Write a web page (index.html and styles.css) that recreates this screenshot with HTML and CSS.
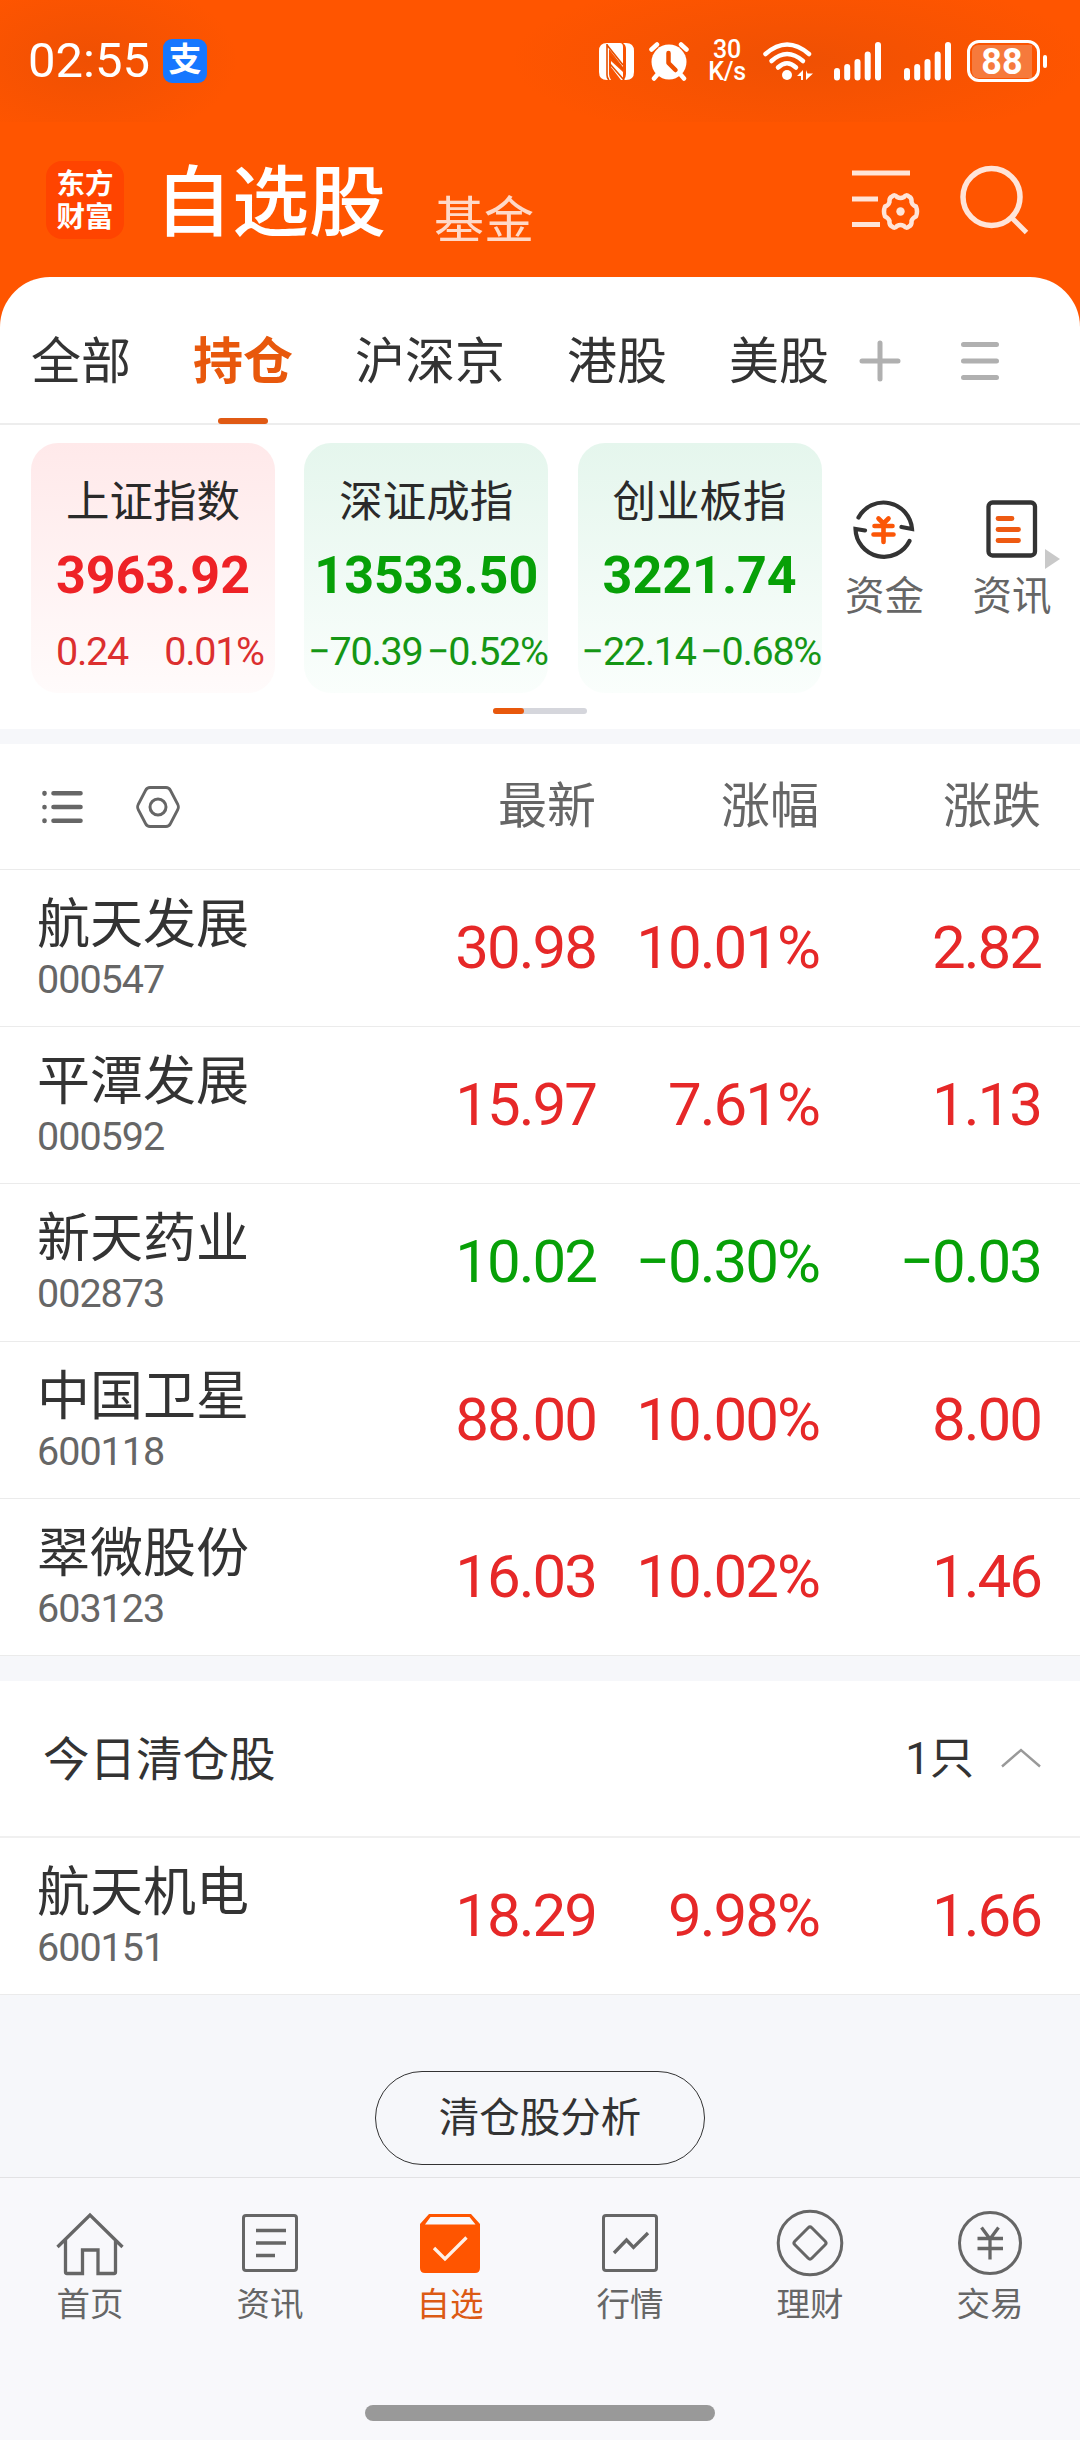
FILE: index.html
```html
<!DOCTYPE html>
<html lang="zh-CN">
<head>
    <meta charset="UTF-8">
    <meta name="viewport" content="width=device-width, initial-scale=1.0">
    <title>自选股</title>

    <link rel="stylesheet" href="styles.css">
</head>
<body>
    <div class="status">
        <span class="time">02:55</span>
        <span class="alipay">支</span>
        <div class="status-icons">
            <svg class="nfc" width="35" height="37" viewBox="0 0 35 37">
                <path fill="#fff" d="M8 0h13q3 0 3 4v20L10 6v25q0 3 2 6H8q-8 0-8-8V8q0-8 8-8z"/>
                <path fill="#fff" d="M24 0h3q8 0 8 8v21q0 8-8 8h-2q2-3 2-6V6q0-4-3-6z"/>
                <path fill="#fff" d="M12 18l12 11v8h-2L12 24z"/>
                <path stroke="#e65100" stroke-width="1.6" fill="none" d="M8 1v31q0 3 2 5M8 2l16 20M11 13l13 13M11 21l14 16"/>
            </svg>
            <svg class="alarm" width="40" height="39" viewBox="0 0 40 39">
                <circle cx="20" cy="20" r="17.5" fill="#fff"/>
                <path stroke="#fff" stroke-width="4.500" stroke-linecap="round" d="M2.500 7.500l5.500-5M37.500 7.500l-5.500-5M8 33l-3 3.500M32 33l3 3.500"/>
                <path stroke="#ee5000" stroke-width="4.500" stroke-linecap="round" stroke-linejoin="round" fill="none" d="M19.500 11v10l7 7"/>
            </svg>
            <div class="speed"><span>30</span><span>K/s</span></div>
            <svg class="wifi" width="51" height="39" viewBox="0 0 51 39">
                <g fill="none" stroke="#fff" stroke-width="4.500" stroke-linecap="round">
                    <path d="M2.500 12Q24 -7 46 12"/>
                    <path d="M8.500 19Q24 5 40 19"/>
                    <path d="M15 25.500Q24 17 33 25.500"/>
                </g>
                <circle cx="24" cy="33" r="5" fill="#fff"/>
                <path fill="#fff" d="M40 28v10h-2v-4h-4zM43 38V28l1.500 3.500H50z"/>
            </svg>
            <svg class="signal" width="48" height="39" viewBox="0 0 48 39">
                <path stroke="#fff" stroke-width="6" stroke-linecap="round" d="M3 29v6.500M13.200 25v10.500M23.500 20v15.500M33.700 12.500v23M44 3v32.500"/>
            </svg>
            <svg class="signal second" width="48" height="39" viewBox="0 0 48 39">
                <path stroke="#fff" stroke-width="6" stroke-linecap="round" d="M3 29v6.500M13.200 25v10.500M23.500 20v15.500M33.700 12.500v23M44 3v32.500"/>
            </svg>
            <div class="battery"><span>88</span></div>
            <i class="battery-tip"></i>
        </div>
    </div>

    <header class="header">
        <div class="logo">东方<br>财富</div>
        <h1>自选股</h1>
        <span class="fund">基金</span>
        <svg class="filter" width="68" height="64" viewBox="0 0 68 64">
            <path stroke="#ffe4d8" stroke-width="5" d="M0 5h58M0 31h26M0 56.500h28"/>
            <path fill="none" stroke="#ffe4d8" stroke-width="4.500" stroke-linejoin="round" d="M40 28.500Q43 26 45 29Q48.500 31 52 29Q54 26 57 28.500Q60 30 59.500 34Q60.500 37.500 64 38.500Q66 43.500 64 48.500Q60.500 50 59.500 53Q60 57 57 58.500Q54 61 52 58Q48.500 56 45 58Q43 61 40 58.500Q37 57 37.500 53Q36.500 50 33 48.500Q31 43.500 33 38.500Q36.500 37.500 37.500 34Q37 30 40 28.500z"/>
            <circle cx="48.500" cy="43.500" r="4.200" fill="#ffe4d8"/>
        </svg>
        <svg class="search" width="70" height="70" viewBox="0 0 70 70">
            <circle cx="31.500" cy="32" r="28.500" fill="none" stroke="#ffe4d8" stroke-width="5.500"/>
            <path stroke="#ffe4d8" stroke-width="5" d="M51 52l15.500 15.500"/>
        </svg>
    </header>

    <div class="panel-wrap">
        <nav class="tabs">
            <span>全部</span>
            <span class="active">持仓</span>
            <span>沪深京</span>
            <span>港股</span>
            <span>美股</span>
            <svg class="plus" width="42" height="42" viewBox="0 0 42 42">
                <path stroke="#b0b0b0" stroke-width="5" stroke-linecap="round" d="M3 21h36M21 3v36"/>
            </svg>
            <svg class="menu" width="38" height="40" viewBox="0 0 38 40">
                <path stroke="#b0b0b0" stroke-width="5" stroke-linecap="round" d="M2.500 3.500h33M2.500 20h33M2.500 36.500h33"/>
            </svg>
        </nav>
    </div>

    <section class="indices">
        <div class="index-row">
            <div class="card up">
                <h2>上证指数</h2>
                <strong>3963.92</strong>
                <div class="diff"><span>0.24</span><span>0.01%</span></div>
            </div>
            <div class="card down">
                <h2>深证成指</h2>
                <strong>13533.50</strong>
                <div class="diff"><span>−70.39</span><span>−0.52%</span></div>
            </div>
            <div class="card down">
                <h2>创业板指</h2>
                <strong>3221.74</strong>
                <div class="diff"><span>−22.14</span><span>−0.68%</span></div>
            </div>
            <div class="shortcut">
                <svg width="62" height="62" viewBox="0 0 62 62">
                    <g fill="none" stroke="#333" stroke-width="4.200" stroke-linecap="round">
                        <path d="M5.500 19.500A28.500 28.500 0 0 1 59 31L48.500 29"/>
                        <path d="M56.500 43A28.500 28.500 0 0 1 2.500 31L12 32.500"/>
                    </g>
                    <path fill="none" stroke="#fb5607" stroke-width="4.600" stroke-linecap="round" d="M25.500 20.500l5 5 5-5M21.500 28h18M20.500 36.500h20M30.500 27v17"/>
                </svg>
                <span>资金</span>
            </div>
            <div class="shortcut">
                <svg width="52" height="62" viewBox="0 0 52 62">
                    <rect x="2.500" y="4.500" width="46.500" height="53" rx="4" fill="none" stroke="#333" stroke-width="4.300"/>
                    <path stroke="#ee5a12" stroke-width="4.800" stroke-linecap="round" d="M12 20.500h14M12 31.500h20.500M12 42.500h20.500"/>
                </svg>
                <span>资讯</span>
                <i class="more"></i>
            </div>
        </div>
        <div class="pager"><i></i></div>
    </section>

    <section class="list">
        <div class="row head">
            <div class="tools">
                <svg width="42" height="34" viewBox="0 0 42 34">
                    <path stroke="#666" stroke-width="4.600" stroke-linecap="round" d="M2.500 3v.6M2.500 17v.3M2.500 30.500v.5M11.500 3.300h27M11.500 17h27M11.500 30.700h27"/>
                </svg>
                <svg width="44" height="42" viewBox="0 0 44 42">
                    <path fill="none" stroke="#666" stroke-width="2.800" d="M14 1.500h16q3 0 4.500 3l7.300 14q1.200 2.500 0 5l-7.300 14q-1.500 3-4.500 3H14q-3 0-4.500-3L2.200 23.500q-1.200-2.500 0-5l7.300-14q1.500-3 4.500-3z"/>
                    <circle cx="22" cy="21" r="8" fill="none" stroke="#666" stroke-width="3"/>
                </svg>
            </div>
            <span>最新</span>
            <span>涨幅</span>
            <span>涨跌</span>
        </div>
        <div class="row up">
            <div class="stock"><b>航天发展</b><small>000547</small></div>
            <span>30.98</span><span>10.01%</span><span>2.82</span>
        </div>
        <div class="row up">
            <div class="stock"><b>平潭发展</b><small>000592</small></div>
            <span>15.97</span><span>7.61%</span><span>1.13</span>
        </div>
        <div class="row down">
            <div class="stock"><b>新天药业</b><small>002873</small></div>
            <span>10.02</span><span>−0.30%</span><span>−0.03</span>
        </div>
        <div class="row up">
            <div class="stock"><b>中国卫星</b><small>600118</small></div>
            <span>88.00</span><span>10.00%</span><span>8.00</span>
        </div>
        <div class="row up">
            <div class="stock"><b>翠微股份</b><small>603123</small></div>
            <span>16.03</span><span>10.02%</span><span>1.46</span>
        </div>
    </section>

    <section class="list cleared">
        <div class="cleared-head">
            <span class="label">今日清仓股</span>
            <span class="label count">1只</span>
            <svg width="40" height="20" viewBox="0 0 40 20">
                <path fill="none" stroke="#999" stroke-width="2.400" d="M1 18.500L20 2l19 16.500"/>
            </svg>
        </div>
        <div class="row up">
            <div class="stock"><b>航天机电</b><small>600151</small></div>
            <span>18.29</span><span>9.98%</span><span>1.66</span>
        </div>
    </section>

    <div class="analysis">
        <button type="button">清仓股分析</button>
    </div>

    <footer class="bottom">
        <div class="bottom-nav">
            <div class="item">
                <svg width="68" height="68" viewBox="0 0 68 68">
                    <path fill="none" stroke="#666" stroke-width="3.300" d="M1.500 38L34 6l32.500 32M9.500 31v32q0 1.500 1.500 1.500h15.500V41h15.500v23.500H58q1.500 0 1.500-1.500V31"/>
                </svg>
                <span>首页</span>
            </div>
            <div class="item">
                <svg width="68" height="68" viewBox="0 0 68 68">
                    <rect x="7.500" y="6.500" width="53" height="55" rx="2.500" fill="none" stroke="#666" stroke-width="3"/>
                    <path stroke="#666" stroke-width="3.300" d="M20 21.500h30M20 34h30M20 46.500h19"/>
                </svg>
                <span>资讯</span>
            </div>
            <div class="item active">
                <svg width="68" height="68" viewBox="0 0 68 68">
                    <path fill="#ff5500" fill-rule="evenodd" d="M13 5h42l9 10v44q0 5-5 5H9q-5 0-5-5V15zM14.500 8L9 15.500h50.500L53.500 8z"/>
                    <path fill="none" stroke="#fff0e6" stroke-width="3.300" d="M18 39l11 11 21.500-21.500"/>
                </svg>
                <span>自选</span>
            </div>
            <div class="item">
                <svg width="68" height="68" viewBox="0 0 68 68">
                    <rect x="7.500" y="6.500" width="53" height="55" rx="2.500" fill="none" stroke="#666" stroke-width="3"/>
                    <path fill="none" stroke="#666" stroke-width="3.300" d="M18 44l12.500-13 7 7.500L52 24"/>
                </svg>
                <span>行情</span>
            </div>
            <div class="item">
                <svg width="68" height="68" viewBox="0 0 68 68">
                    <circle cx="34" cy="34" r="31.800" fill="none" stroke="#666" stroke-width="3"/>
                    <rect x="22" y="22" width="24" height="24" rx="2.500" transform="rotate(45 34 34)" fill="none" stroke="#666" stroke-width="3"/>
                </svg>
                <span>理财</span>
            </div>
            <div class="item">
                <svg width="68" height="68" viewBox="0 0 68 68">
                    <circle cx="34" cy="34" r="30.500" fill="none" stroke="#666" stroke-width="3"/>
                    <path fill="none" stroke="#666" stroke-width="3.300" d="M25.500 18.500L34 30l8.500-11.500M21.500 29.500h25.500M21.500 39.500h25.500M34 29v21.500"/>
                </svg>
                <span>交易</span>
            </div>
        </div>
        <div class="home-bar"></div>
    </footer>
</body>
</html>
```
FILE: styles.css
```css
* {
    box-sizing: border-box;
}
body {
    margin: 0;
    width: 1080px;
    height: 2440px;
    overflow: hidden;
    display: flex;
    flex-direction: column;
    font-family: Roboto, "Noto Sans CJK SC", sans-serif;
    color: #333;
    background-color: #f6f7fa;
}
svg {
    display: block;
    flex: none;
}
h1, h2 {
    margin: 0;
    font-weight: 400;
}

/* status bar */
.status {
    height: 122px;
    padding: 0 33px 0 28px;
    display: flex;
    align-items: center;
    color: #fff;
    background:
        radial-gradient(ellipse 150px 85px at 88px 60px, rgba(205, 70, 10, .32), transparent),
        radial-gradient(ellipse 290px 85px at 800px 60px, rgba(205, 70, 10, .32), transparent),
        #ff5500;
}
.time {
    width: 122px;
    font-size: 49px;
    line-height: 60px;
    letter-spacing: 0;
}
.alipay {
    width: 44px;
    height: 44px;
    margin-left: 13px;
    border-radius: 9px;
    background-color: #1677ff;
    font-size: 33px;
    font-weight: 700;
    line-height: 42px;
    text-align: center;
}
.status-icons {
    margin-left: auto;
    display: flex;
    align-items: center;
}
.alarm {
    margin-left: 15px;
}
.speed {
    width: 42px;
    margin: 0 15px 0 17px;
    display: flex;
    flex-direction: column;
    font-size: 25px;
    font-weight: 500;
    line-height: 22px;
    text-align: center;
    letter-spacing: -.3px;
}
.signal {
    margin-left: 20px;
}
.second {
    margin-left: 22px;
}
.battery {
    width: 73px;
    height: 42px;
    margin-left: 15px;
    padding: 2px;
    border: 3px solid #fff;
    border-radius: 12px;
}
.battery span {
    display: block;
    width: 60px;
    height: 33px;
    border-radius: 6px 0 0 6px;
    background-color: #f67a3c;
    font-size: 36px;
    font-weight: 700;
    line-height: 34px;
    text-align: center;
}
.battery-tip {
    width: 4px;
    height: 13px;
    margin-left: 3px;
    border-radius: 2px;
    background-color: #fff;
}

/* title bar */
.header {
    height: 155px;
    padding: 0 50px 0 46px;
    display: flex;
    align-items: center;
    color: #fff;
    background-color: #ff5500;
}
.logo {
    width: 78px;
    height: 78px;
    border-radius: 16px;
    background-color: #ff4400;
    font-size: 28.500px;
    font-weight: 700;
    line-height: 33px;
    padding-top: 7px;
    text-align: center;
}
.header h1 {
    margin-left: 31px;
    font-size: 77px;
    font-weight: 500;
    line-height: 90px;
    padding-top: 8px;
}
.fund {
    margin-left: 48px;
    padding-top: 43px;
    font-size: 50px;
    line-height: 60px;
    color: #ffd9c8;
}
.filter {
    margin-left: auto;
}
.search {
    margin-left: 40px;
}

/* tabs */
.panel-wrap {
    background-color: #ff5500;
}
.tabs {
    height: 148px;
    padding-left: 31px;
    display: flex;
    align-items: center;
    gap: 62px;
    border-bottom: 2px solid #ededed;
    background-color: #fff;
    border-top-left-radius: 50px;
    border-top-right-radius: 50px;
    font-size: 50px;
}
.tabs span {
    height: 146px;
    padding-top: 12px;
    line-height: 146px;
    margin-top: -1px;
}
.tabs .active {
    display: flex;
    flex-direction: column;
    align-items: center;
    font-weight: 700;
    color: #e8580c;
}
.tabs .active::after {
    content: "";
    flex: none;
    width: 50px;
    height: 6px;
    margin-top: -17px;
    border-radius: 3px;
    background-color: #e05a14;
}
.plus {
    margin-left: -32px;
    margin-top: 22px;
}
.menu {
    margin-left: -2px;
    margin-top: 22px;
}

/* index cards */
.indices {
    height: 304px;
    padding-top: 18px;
    background-color: #fff;
}
.index-row {
    display: flex;
    padding-left: 31px;
}
.card {
    width: 244px;
    height: 250px;
    margin-right: 29.300px;
    padding-top: 27px;
    border-radius: 27px;
    text-align: center;
}
.card.up {
    background: linear-gradient(#ffe9ea, #fffbfb);
}
.card.down {
    background: linear-gradient(#e5f6ed, #fafefc);
}
.card h2 {
    font-size: 43.500px;
    line-height: 66px;
    color: #2a2a2a;
}
.card strong {
    display: block;
    font-size: 52px;
    line-height: 79px;
}
.card .diff {
    display: grid;
    grid-template-columns: 1fr 1fr;
    font-size: 39.500px;
    line-height: 74px;
    letter-spacing: -1.300px;
}
.diff span {
    display: flex;
    justify-content: center;
}
.up strong {
    color: #ee2226;
}
.row.up > span {
    color: #e62828;
}
.down strong, .row.down > span {
    color: #07a007;
}
.up .diff {
    color: #dc2f2f;
}
.down .diff {
    color: #159615;
}
.shortcut {
    position: relative;
    width: 128px;
    padding-top: 55px;
    display: flex;
    flex-direction: column;
    align-items: center;
    font-size: 39.500px;
    line-height: 60px;
    color: #666;
}
.card + .shortcut {
    width: 127px;
    margin-left: -30px;
}
.shortcut span {
    margin-top: 7px;
}
.more {
    position: absolute;
    top: 106px;
    left: 97px;
    border-left: 15px solid #c9c9c9;
    border-top: 10px solid transparent;
    border-bottom: 10px solid transparent;
}
.pager {
    width: 94px;
    height: 6px;
    margin: 15px auto 0;
    border-radius: 3px;
    background-color: #d5d6dc;
}
.pager i {
    display: block;
    width: 31px;
    height: 6px;
    border-radius: 3px;
    background-color: #e8580c;
}

/* stock list */
.list {
    margin-top: 15px;
    background-color: #fff;
}
.row {
    height: 157.200px;
    padding-left: 37px;
    display: grid;
    grid-template-columns: 380px 179px 223px 222px;
    align-items: center;
    border-bottom: 1px solid #ebebeb;
}
.row > span {
    font-size: 60px;
    line-height: 72px;
    letter-spacing: -2px;
    text-align: right;
}
.row.head {
    height: 126px;
}
.row.head > span {
    font-size: 49px;
    letter-spacing: 0;
    color: #666;
}
.tools {
    display: flex;
    align-items: center;
    gap: 52px;
    padding-left: 5px;
}
.stock b {
    display: block;
    font-size: 53px;
    font-weight: 400;
    line-height: 64px;
}
.stock small {
    display: block;
    font-size: 39.500px;
    line-height: 46px;
    letter-spacing: -1px;
    color: #666;
}
.cleared {
    margin-top: 25px;
}
.cleared-head {
    height: 157px;
    padding: 0 39px 0 43px;
    display: flex;
    align-items: center;
    border-bottom: 2px solid #f0f0f0;
    font-size: 46.500px;
}
.label {
    padding-bottom: 6px;
}
.count {
    margin: 0 27px 0 auto;
    font-size: 44px;
}

/* button */
.analysis {
    flex: 1;
    padding-top: 76px;
    text-align: center;
}
.analysis button {
    width: 330px;
    height: 94px;
    padding: 0 0 7px;
    border: 1px solid #333;
    border-radius: 47px;
    background: none;
    font-family: inherit;
    font-size: 40.500px;
    color: #333;
}

/* bottom navigation */
.bottom {
    height: 263px;
    border-top: 1px solid #e2e2e4;
    background-color: #f8f8fb;
}
.bottom-nav {
    height: 227px;
    padding-top: 31px;
    display: grid;
    grid-template-columns: repeat(6, 1fr);
}
.item {
    display: flex;
    flex-direction: column;
    align-items: center;
    font-size: 33.500px;
    line-height: 44px;
    color: #666;
}
.item span {
    margin-top: 6px;
}
.item.active {
    color: #dc5a14;
}
.home-bar {
    width: 350px;
    height: 16px;
    margin: 0 auto;
    border-radius: 8px;
    background-color: #999;
}
```
